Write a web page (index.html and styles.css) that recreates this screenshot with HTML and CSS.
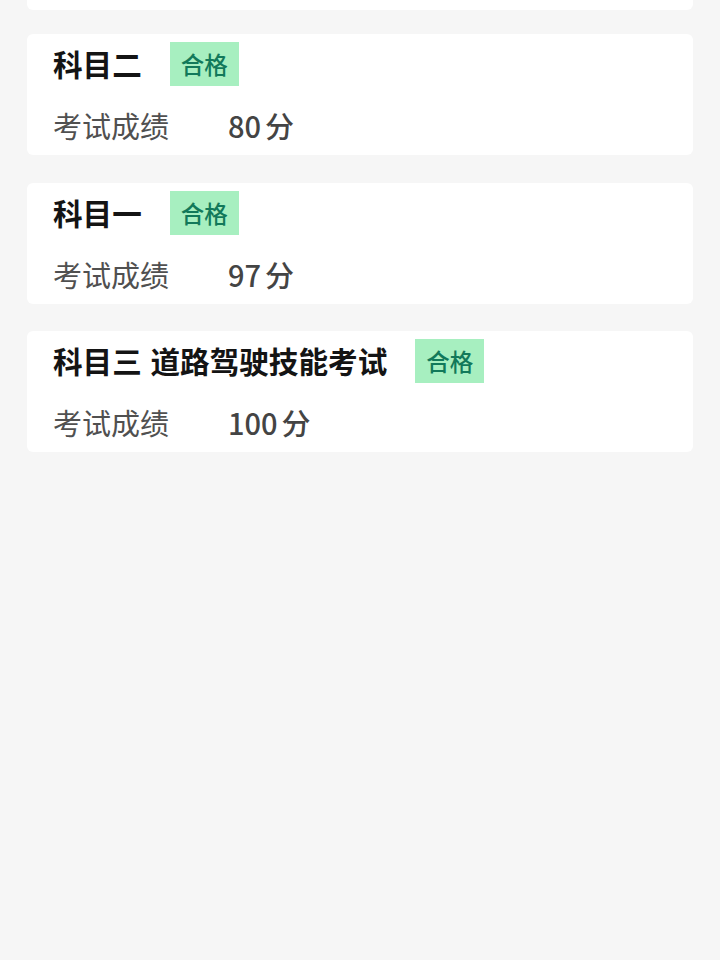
FILE: index.html
```html
<!DOCTYPE html>
<html lang="zh-CN">
<head>
<meta charset="utf-8">
<title>考试成绩</title>
<link rel="stylesheet" href="styles.css">
</head>
<body>
<div class="list">
  <div class="card card-stub"></div>
  <div class="card">
    <div class="head">
      <span class="title">科目二</span>
      <span class="badge">合格</span>
    </div>
    <div class="score">
      <span class="label">考试成绩</span>
      <span class="value">80<span class="unit">分</span></span>
    </div>
  </div>
  <div class="card">
    <div class="head">
      <span class="title">科目一</span>
      <span class="badge">合格</span>
    </div>
    <div class="score">
      <span class="label">考试成绩</span>
      <span class="value">97<span class="unit">分</span></span>
    </div>
  </div>
  <div class="card">
    <div class="head">
      <span class="title">科目三 道路驾驶技能考试</span>
      <span class="badge">合格</span>
    </div>
    <div class="score">
      <span class="label">考试成绩</span>
      <span class="value">100<span class="unit">分</span></span>
    </div>
  </div>
</div>
</body>
</html>
```

FILE: styles.css
```css
html, body {
  margin: 0;
  padding: 0;
  background: #f6f6f6;
  font-family: "Noto Sans CJK SC", "Noto Sans", sans-serif;
}

.list {
  display: flex;
  flex-direction: column;
  gap: 27.5px;
  padding: 0 27px;
}

.card {
  background: #ffffff;
  border-radius: 6px;
  height: 121px;
  box-sizing: border-box;
  padding: 8px 26px 0 26px;
}

.card-stub {
  height: 10px;
  padding: 0;
  border-radius: 0 0 6px 6px;
  margin-bottom: -3.5px;
}

.head {
  display: flex;
  align-items: center;
  height: 44px;
}

.title {
  font-size: 29.6px;
  font-weight: 700;
  color: #141414;
  line-height: 44px;
  word-spacing: 2px;
}

.badge {
  margin-left: 28px;
  background: #a7efc0;
  color: #12795a;
  font-size: 23.5px;
  font-weight: 500;
  line-height: 44px;
  height: 44px;
  padding: 0 11px;
  box-sizing: border-box;
}

.score {
  display: flex;
  align-items: center;
  margin-top: 19px;
  height: 40px;
}

.label {
  width: 175px;
  font-size: 29px;
  color: #505050;
  font-weight: 400;
  line-height: 40px;
}

.value {
  font-size: 29px;
  color: #444444;
  font-weight: 500;
  line-height: 40px;
}

.unit {
  margin-left: 4px;
}
```
